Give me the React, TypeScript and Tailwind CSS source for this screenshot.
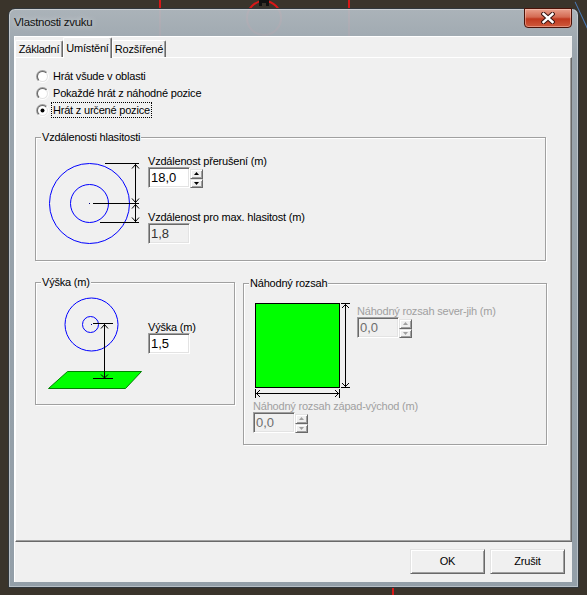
import React from 'react';

// classic 3D edges
const sunken =
  'border border-t-[#a0a0a0] border-l-[#a0a0a0] border-r-white border-b-white shadow-[inset_1px_1px_0_#696969,inset_-1px_-1px_0_#e3e3e3]';
const raised =
  'border border-t-[#e3e3e3] border-l-[#e3e3e3] border-r-[#696969] border-b-[#696969] shadow-[inset_1px_1px_0_#fff,inset_-1px_-1px_0_#a0a0a0]';

function Radio({ label, checked, focused }: { label: string; checked?: boolean; focused?: boolean }) {
  return (
    <div className="flex items-center h-4 gap-[3px]">
      <svg width="13" height="13" viewBox="0 0 13 13">
        <defs>
          <linearGradient id="radioOuter" x1="0" y1="0" x2="1" y2="1">
            <stop offset="0.5" stopColor="#a0a0a0" />
            <stop offset="0.5" stopColor="#ffffff" />
          </linearGradient>
          <linearGradient id="radioInner" x1="0" y1="0" x2="1" y2="1">
            <stop offset="0.5" stopColor="#696969" />
            <stop offset="0.5" stopColor="#e3e3e3" />
          </linearGradient>
        </defs>
        <circle cx="6.5" cy="6.5" r="6.5" fill="url(#radioOuter)" />
        <circle cx="6.5" cy="6.5" r="5.5" fill="url(#radioInner)" />
        <circle cx="6.5" cy="6.5" r="4.5" fill="#fff" />
        {checked && <circle cx="6.5" cy="6.5" r="2" fill="#000" />}
      </svg>
      <span className={`px-px leading-[14px] ${focused ? 'outline-1 outline-dotted outline-black' : ''}`}>{label}</span>
    </div>
  );
}

function Arrow({ up, color }: { up?: boolean; color: string }) {
  return (
    <svg width="5" height="3" viewBox="0 0 5 3">
      <path d={up ? 'M2.5 0L5 3H0z' : 'M0 0h5L2.5 3z'} fill={color} />
    </svg>
  );
}

function Spin({ disabled }: { disabled?: boolean }) {
  const c = disabled ? '#a0a0a0' : '#000';
  return (
    <div className="flex flex-col w-[13px] h-[19px] self-end">
      <div className={`${raised} flex-1 bg-[#f0f0f0] flex items-center justify-center`}>
        <Arrow up color={c} />
      </div>
      <div className={`${raised} flex-1 bg-[#f0f0f0] flex items-center justify-center`}>
        <Arrow color={c} />
      </div>
    </div>
  );
}

function NumField({ value, spin, disabled, readOnly }: { value: string; spin?: boolean; disabled?: boolean; readOnly?: boolean }) {
  const bg = disabled || readOnly ? 'bg-[#f0f0f0]' : 'bg-white';
  const fg = disabled ? 'text-[#6d6d6d]' : readOnly ? 'text-[#333]' : 'text-black';
  return (
    <div className="flex h-[21px]">
      <div className={`${sunken} ${bg} ${fg} w-[42px] flex items-center pl-[2px] text-[13px] tracking-normal`}>{value}</div>
      {spin && <Spin disabled={disabled} />}
    </div>
  );
}

function Group({ title, className, children }: { title: string; className: string; children?: React.ReactNode }) {
  return (
    <fieldset className={`border border-[#a0a0a0] shadow-[inset_1px_1px_0_#fff,1px_1px_0_#fff] ${className}`}>
      <legend className="ml-[5px] px-px bg-[#f0f0f0] leading-[13px]">{title}</legend>
      {children}
    </fieldset>
  );
}

function Tab({ label, active, width }: { label: string; active?: boolean; width: string }) {
  return (
    <div
      className={`${width} flex items-center justify-center bg-[#f0f0f0] border-l border-t border-white border-r border-r-[#696969] rounded-t-[2px] shadow-[inset_-1px_0_0_#a0a0a0] ${
        active ? 'h-[21px] relative z-10 -mb-px' : 'h-[17px]'
      }`}
    >
      {label}
    </div>
  );
}

const stroke = { stroke: '#000', strokeWidth: 1, fill: 'none' } as const;

function DistanceDiagram() {
  return (
    <svg width="105" height="110" viewBox="0 0 105 110" shapeRendering="crispEdges">
      <circle cx="53.5" cy="59.5" r="40" stroke="#0000ff" fill="none" shapeRendering="auto" />
      <circle cx="53.5" cy="59.5" r="19" stroke="#0000ff" fill="none" shapeRendering="auto" />
      <rect x="53" y="59" width="1" height="1" fill="#000080" />
      <path d="M69 19.5H103M57 59.5H103M64 78.5H103" {...stroke} />
      <path d="M99.5 20V59M99.5 60V78" {...stroke} />
      <g shapeRendering="auto">
        <path d="M96 24.5L99.5 20.5L103 24.5M96 54.5L99.5 58.5L103 54.5" {...stroke} />
        <path d="M96 64.5L99.5 60.5L103 64.5M96 73.5L99.5 77.5L103 73.5" {...stroke} />
      </g>
    </svg>
  );
}

function HeightDiagram() {
  return (
    <svg width="106" height="102" viewBox="0 0 106 102" shapeRendering="crispEdges">
      <circle cx="55.5" cy="35.5" r="26.5" stroke="#0000ff" fill="none" shapeRendering="auto" />
      <circle cx="54.5" cy="35.5" r="8" stroke="#0000ff" fill="none" shapeRendering="auto" />
      <rect x="55" y="35" width="1" height="1" fill="#000080" />
      <polygon points="12.5,99.5 31.5,82.5 105.5,82.5 89.5,99.5" fill="#00ff00" stroke="#008000" shapeRendering="auto" />
      <path d="M57 34.5H77M57 89.5H77M68.5 35V89" {...stroke} />
      <path d="M65 39.5L68.5 35.5L72 39.5M65 85.5L68.5 89L72 85.5" {...stroke} shapeRendering="auto" />
    </svg>
  );
}

function RangeDiagram() {
  return (
    <svg width="108" height="110" viewBox="0 0 108 110" shapeRendering="crispEdges">
      <rect x="11.5" y="13.5" width="84" height="84" fill="#00ff00" stroke="#000" />
      <path d="M101.5 14V97M97 13.5H106M97 97.5H106" {...stroke} />
      <path d="M12 103.5H95M11.5 99V108M95.5 99V108" {...stroke} />
      <g shapeRendering="auto">
        <path d="M98 18L101.5 14.5L105 18M98 93L101.5 96.5L105 93" {...stroke} />
        <path d="M16 100L12.5 103.5L16 107M91 100L94.5 103.5L91 107" {...stroke} />
      </g>
    </svg>
  );
}

function CloseButton() {
  return (
    <div className="w-[48px] h-[20px] -mt-px mr-[6px] rounded-b-[4px] border border-[#4a1208] bg-[linear-gradient(180deg,#e9a08c_0%,#d46a52_45%,#c0391f_55%,#cf5a3c_100%)] shadow-[inset_0_0_0_1px_rgba(255,210,200,0.45)] flex items-center justify-center">
      <svg width="14" height="12" viewBox="0 0 14 12">
        <path d="M2.5 2L11.5 10M11.5 2L2.5 10" stroke="#3a1410" strokeWidth="4.4" strokeLinecap="square" />
        <path d="M2.5 2L11.5 10M11.5 2L2.5 10" stroke="#fff" strokeWidth="2.4" strokeLinecap="square" />
      </svg>
    </div>
  );
}

function Button({ label }: { label: string }) {
  return <div className={`${raised} w-[75px] h-[25px] bg-[#f0f0f0] flex items-center justify-center`}>{label}</div>;
}

export default function App() {
  return (
    <div className="relative w-[587px] h-[595px] overflow-hidden bg-[#3a342b] pl-[8px] pt-[8px] font-['Liberation_Sans',Arial,sans-serif] text-[11px] tracking-[-0.2px] text-black">
      {/* map lines behind the glass frame */}
      <div className="absolute left-[159px] top-0 w-[2px] h-[40px] bg-[#d81818]" />
      <div className="absolute left-[348px] top-0 w-[2px] h-[40px] bg-[#d81818]" />
      <div className="absolute left-[392px] bottom-0 w-[2px] h-[12px] bg-[#d81818]" />
      <svg className="absolute left-[240px] top-0" width="50" height="40" viewBox="0 0 50 40">
        <circle cx="24" cy="18" r="17" stroke="#d81818" strokeWidth="2" fill="none" />
        <path d="M19 0h10v6h-3v-3h-4v3h-3z" fill="#111" />
      </svg>
      <div className="absolute right-[3px] top-0 w-px h-[40px] bg-[#4a7ab8] rotate-[-25deg]" />

      <div className="relative w-[571px] h-[580px] rounded-t-[7px] border border-[#30363b] bg-[linear-gradient(180deg,rgba(178,187,194,0.94),rgba(158,169,178,0.96)_8%,rgba(150,162,172,0.97))] shadow-[inset_0_0_0_1px_rgba(255,255,255,0.35)] flex flex-col">
        <div className="h-[27px] flex justify-between">
          <span className="self-center pl-[5px] pt-px text-[11.5px] tracking-[-0.3px] text-[#111] [text-shadow:0_0_6px_rgba(255,255,255,0.7)]">
            Vlastnosti zvuku
          </span>
          <CloseButton />
        </div>

        <div className="ml-[5px] w-[558px] h-[546px] bg-[#f0f0f0] border-l border-t border-white flex flex-col">
          <div className="h-[20px] flex items-end">
            <Tab label="Základní" width="w-[48px]" />
            <Tab label="Umístění" width="w-[49px]" active />
            <Tab label="Rozšířené" width="w-[54px]" />
          </div>

          <div className="h-[485px] border-l border-t border-white border-r border-b border-r-[#696969] border-b-[#696969] shadow-[inset_-1px_-1px_0_#a0a0a0] pl-[19px] pt-[10px] flex flex-col">
            <div className="ml-px flex flex-col gap-px">
              <Radio label="Hrát všude v oblasti" />
              <Radio label="Pokaždé hrát z náhodné pozice" />
              <Radio label="Hrát z určené pozice" checked focused />
            </div>

            <Group title="Vzdálenosti hlasitosti" className="mt-[13px] w-[511px] h-[130px]">
              <div className="flex">
                <DistanceDiagram />
                <div className="ml-[7px] flex flex-col">
                  <div className="mt-[11px] h-[12px] leading-[12px]">Vzdálenost přerušení (m)</div>
                  <NumField value="18,0" spin />
                  <div className="mt-[23px] h-[12px] leading-[12px]">Vzdálenost pro max. hlasitost (m)</div>
                  <NumField value="1,8" readOnly />
                </div>
              </div>
            </Group>

            <div className="mt-[15px] flex items-start gap-[8px]">
              <Group title="Výška (m)" className="w-[200px] h-[129px]">
                <div className="flex">
                  <HeightDiagram />
                  <div className="ml-[6px] flex flex-col">
                    <div className="mt-[32px] h-[12px] leading-[12px]">Výška (m)</div>
                    <NumField value="1,5" />
                  </div>
                </div>
              </Group>

              <Group title="Náhodný rozsah" className="mt-px w-[304px] h-[168px]">
                <div className="flex flex-col">
                  <div className="flex">
                    <RangeDiagram />
                    <div className="ml-[5px] flex flex-col">
                      <div className="mt-[15px] h-[12px] leading-[12px] text-[#a0a0a0]">Náhodný rozsah sever-jih (m)</div>
                      <NumField value="0,0" spin disabled />
                    </div>
                  </div>
                  <div className="ml-[9px] flex flex-col">
                    <div className="h-[12px] leading-[12px] text-[#a0a0a0]">Náhodný rozsah západ-východ (m)</div>
                    <NumField value="0,0" spin disabled />
                  </div>
                </div>
              </Group>
            </div>
          </div>

          <div className="flex-1 flex justify-end items-start gap-[5px] pt-[7px] pr-[7px]">
            <Button label="OK" />
            <Button label="Zrušit" />
          </div>
        </div>
      </div>
    </div>
  );
}
